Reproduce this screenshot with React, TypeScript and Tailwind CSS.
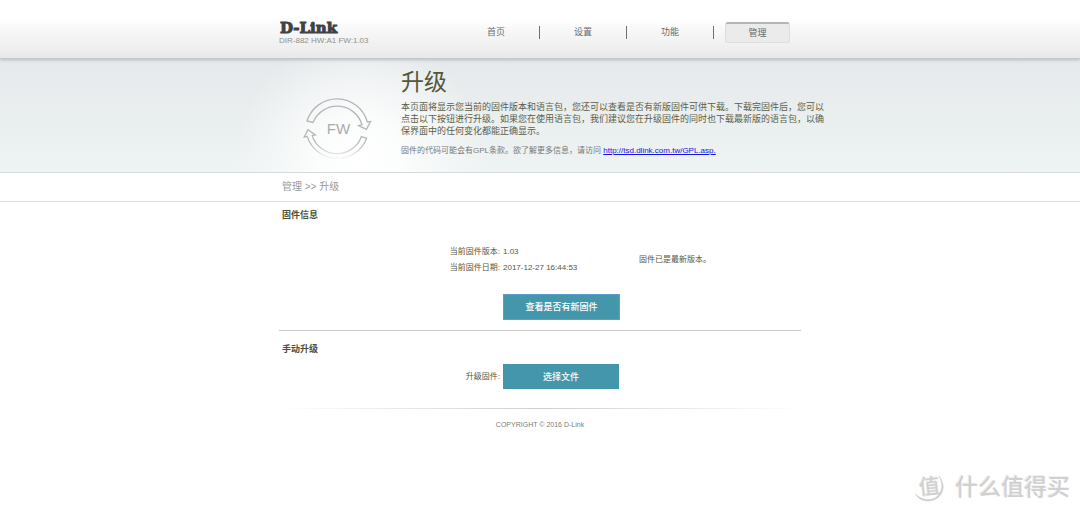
import React, { useRef } from 'react';

const navItems = [
  { label: '首页', active: false },
  { label: '设置', active: false },
  { label: '功能', active: false },
  { label: '管理', active: true },
];

function Header() {
  return (
    <header className="relative h-[59px] border-b border-[#c3c8c9] bg-linear-to-b from-white from-30% to-[#e9e9e9] shadow-[0_1px_3px_rgba(120,130,135,0.45)]">
      <div className="mx-auto flex w-full max-w-[522px] items-start justify-between">
        <div className="pt-5">
          <a href="#" className="flex h-[15px] items-start pl-px font-['DejaVu_Serif',serif] text-[15px] leading-4 font-bold text-[#3f4142] [-webkit-text-stroke:1px_#3f4142]">
            D-Link
          </a>
          <p className="text-[8px] leading-[12px] text-[#8e9091]">DIR-882 HW:A1 FW:1.03</p>
        </div>
        <nav className="flex pt-[22px]">
          {navItems.map((item) => (
            <div key={item.label} className="flex w-[87px] items-center">
              <div className="flex flex-1 justify-center">
                {item.active ? (
                  <a
                    href="#"
                    aria-current="page"
                    className="h-[21px] w-[65px] rounded-[3px] border border-t-2 border-[#dedede] border-t-[#b5b5b5] bg-[#ebebeb] text-center text-[9px] leading-[18px] text-[#6a6a6a]"
                  >
                    {item.label}
                  </a>
                ) : (
                  <a href="#" className="text-[9px] leading-[21px] text-[#6a6a6a]">
                    {item.label}
                  </a>
                )}
              </div>
              {!item.active && <span className="h-[13px] w-px bg-[#6f6f6f]" />}
            </div>
          ))}
        </nav>
      </div>
    </header>
  );
}

function FirmwareIcon() {
  return (
    <svg className="mt-9 ml-6 block h-[66px] w-[70px]" viewBox="0 0 70 66" role="img" aria-label="FW">
      <defs>
        <linearGradient id="ringFade" gradientUnits="userSpaceOnUse" x1="0" y1="0" x2="0" y2="66">
          <stop offset="0" stopColor="#b4b6b7" />
          <stop offset="0.72" stopColor="#b4b6b7" />
          <stop offset="0.99" stopColor="#b4b6b7" stopOpacity="0" />
        </linearGradient>
      </defs>
      <g fill="none" stroke="url(#ringFade)" strokeWidth="1.3" strokeLinejoin="miter">
        <path d="M4 26 A31.5 31.5 0 0 1 64.4 27 L67.6 26.600 L63.4 34.4 L55.600 30.6 L59 29.6 A26 26 0 0 0 10 27.5 Z" />
        <path d="M63.6 43.4 A31.5 31.5 0 0 1 4.2 41.4 L1.2 42 L5 34.6 L12.4 40 L9.2 40.6 A26 26 0 0 0 58.4 41.6 Z" />
      </g>
      <text x="35.5" y="39" textAnchor="middle" fontFamily="'Liberation Sans', sans-serif" fontSize="15" fill="#a9acad">
        FW
      </text>
    </svg>
  );
}

function Intro() {
  return (
    <section className="border-b border-[#d5dbdb] bg-[radial-gradient(circle_125px_at_calc(50%-180px)_100px,#ffffff_0%,rgba(255,255,255,0.85)_30%,rgba(255,255,255,0)_100%),linear-gradient(to_bottom,#e5e9eb,#eef3f3)]">
      <div className="mx-auto flex h-[113px] w-full max-w-[522px]">
        <div className="w-[122px] shrink-0">
          <FirmwareIcon />
        </div>
        <div className="min-w-0 flex-1">
          <h1 className="pt-[7px] text-[23px] leading-8 text-[#55573a]">升级</h1>
          <p className="mt-[3px] text-[9px] leading-[12px] whitespace-nowrap text-[#5c5e48]">
            本页面将显示您当前的固件版本和语言包，您还可以查看是否有新版固件可供下载。下载完固件后，您可以
            <br />
            点击以下按钮进行升级。如果您在使用语言包，我们建议您在升级固件的同时也下载最新版的语言包，以确
            <br />
            保界面中的任何变化都能正确显示。
          </p>
          <p className="mt-2 text-[8px] leading-[12px] whitespace-nowrap text-[#777a78]">
            固件的代码可能会有GPL条款。欲了解更多信息，请访问{' '}
            <a href="http://tsd.dlink.com.tw/GPL.asp" className="text-[#1a12e8] underline">
              http://tsd.dlink.com.tw/GPL.asp.
            </a>
          </p>
        </div>
      </div>
    </section>
  );
}

function Breadcrumb() {
  return (
    <nav aria-label="breadcrumb" className="border-b border-[#e0e0e0]">
      <p className="mx-auto w-full max-w-[522px] pl-[3px] text-[10px] leading-7 text-[#9a9a9a]">管理 &gt;&gt; 升级</p>
    </nav>
  );
}

function Watermark() {
  return (
    <div className="absolute right-[10px] bottom-[10px] flex items-center gap-[10px] text-[#d0d0d0] [text-shadow:-1px_-1px_0_#f0f0f0]">
      <div className="relative size-8 text-center">
        <svg className="absolute inset-0 size-8" viewBox="0 0 32 32" aria-hidden="true">
          <path
            d="M26 5 C34 15 30 28 17 30 C11 30.5 5 28 2.5 23 C6.500 27 12 29 17 28.6 C28 27 32 15 26 5 Z"
            fill="#cdcdcd"
            stroke="#cdcdcd"
            strokeWidth="0.5"
          />
        </svg>
        <span className="relative inline-block -rotate-6 text-[21px] leading-8 font-medium">值</span>
      </div>
      <span className="text-[23px] leading-8 font-medium">什么值得买</span>
    </div>
  );
}

export default function App() {
  const fileInput = useRef<HTMLInputElement>(null);

  return (
    <div className="relative min-h-screen bg-white font-['Liberation_Sans','Noto_Sans_CJK_SC',sans-serif]">
      <Header />
      <Intro />
      <Breadcrumb />
      <main className="mx-auto w-full max-w-[522px] text-[8px] leading-4 text-[#55573f]">
        <section className="border-b border-[#c9c9c9] pb-[10px]">
          <h2 className="pt-[5px] pl-[3px] text-[9px] leading-4 font-bold text-[#4c4e33]">固件信息</h2>
          <div className="mt-[21px] flex items-center">
            <dl className="grid w-[360px] grid-cols-[221px_1fr] gap-x-[3px]">
              <dt className="text-right">当前固件版本:</dt>
              <dd>1.03</dd>
              <dt className="text-right">当前固件日期:</dt>
              <dd>2017-12-27 16:44:53</dd>
            </dl>
            <p role="status">固件已是最新版本。</p>
          </div>
          <button
            type="button"
            className="mt-[18px] ml-56 block h-[26px] w-[117px] border border-[#5b9fd0] bg-[#4497ab] text-[9px] font-medium text-white"
          >
            查看是否有新固件
          </button>
        </section>
        <section className="pb-[19px]">
          <h2 className="pt-[10px] pl-[3px] text-[9px] leading-4 font-bold text-[#4c4e33]">手动升级</h2>
          <div className="mt-[7px] flex items-center gap-[3px]">
            <label htmlFor="firmware-file" className="w-[221px] text-right">
              升级固件:
            </label>
            <input id="firmware-file" ref={fileInput} type="file" className="hidden" />
            <button
              type="button"
              onClick={() => fileInput.current?.click()}
              className="h-[25px] w-[116px] bg-[#4497ab] text-[9px] font-medium text-white"
            >
              选择文件
            </button>
          </div>
        </section>
      </main>
      <footer className="mx-auto w-full max-w-[522px]">
        <div className="h-px bg-linear-to-r from-transparent via-[#cfcfcf] to-transparent" />
        <p className="pt-2 text-center text-[7px] leading-4 text-[#7d7d7d]">COPYRIGHT © 2016 D-Link</p>
      </footer>
      <Watermark />
    </div>
  );
}
